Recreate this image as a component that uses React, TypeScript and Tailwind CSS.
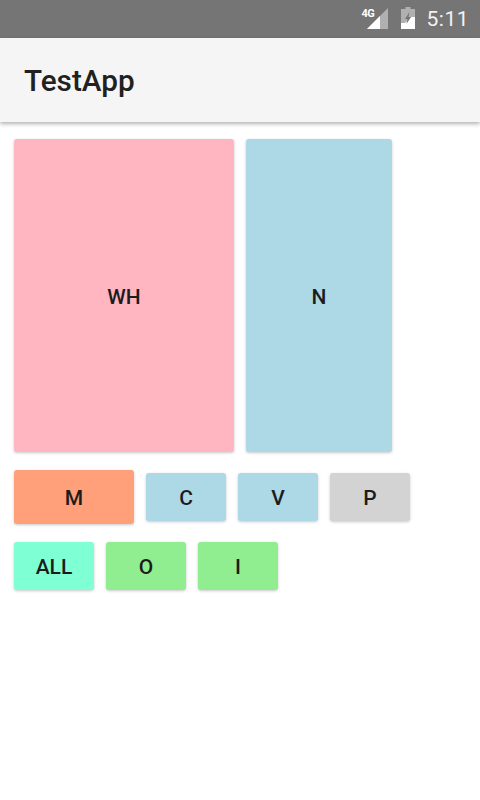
const Tile = ({ label, className }: { label: string; className: string }) => (
  <div
    className={`flex items-center justify-center rounded-[3px] text-[21px] font-medium text-[#1c1c1c] shadow-[0_1px_3px_rgba(0,0,0,0.22)] ${className}`}
  >
    {label}
  </div>
);

const StatusBar = () => (
  <div className="flex h-[38px] items-center justify-end bg-[#757575] pr-[11px]">
    <div className="relative mr-[13px] h-[30px] w-[27px]">
      <span className="absolute left-px top-[3px] text-[11px] font-bold leading-[14px] tracking-[-0.5px] text-white">4G</span>
      <svg width="27" height="30" viewBox="0 0 27 30" className="block">
        <path d="M6 25 L27 4 V25 Z" fill="#b0b0b0" />
        <path d="M6 25 L19 12 V25 Z" fill="#ffffff" />
      </svg>
    </div>
    <svg width="14" height="22" viewBox="0 0 14 22" className="mb-[2px] mr-[12px] block">
      <path d="M4.5 0 H9.5 V2 H14 V22 H0 V2 H4.5 Z" fill="#b0b0b0" />
      <path d="M0 22 V16 H4 L10 10 H14 V22 Z" fill="#ffffff" />
      <path d="M8.5 5 L4 12 H6.5 L5.5 17 L10 10 H7.5 Z" fill="#757575" />
    </svg>
    <span className="text-[21px] leading-none tracking-[0.5px] text-[#f2f2f2]">5:11</span>
  </div>
);

export default function App() {
  return (
    <div className="h-[800px] w-[480px] overflow-hidden bg-white font-['Roboto',sans-serif]">
      <StatusBar />
      <div className="flex h-[84px] items-center bg-[#f5f5f5] pl-[24px] pt-[2px] shadow-[0_2px_4px_rgba(0,0,0,0.3)]">
        <h1 className="text-[29.7px] font-medium text-[#212121]">TestApp</h1>
      </div>

      <div className="flex flex-col px-[14px] pt-[17px]">
        <div className="flex gap-[12px]">
          <Tile label="WH" className="h-[313px] w-[220px] bg-[#ffb6c1] pt-[4px]" />
          <Tile label="N" className="h-[313px] w-[146px] bg-[#add8e6] pt-[4px]" />
        </div>

        <div className="mt-[18px] flex items-center gap-[12px]">
          <Tile label="M" className="h-[54px] w-[120px] bg-[#ffa07a] pt-[3px]" />
          <Tile label="C" className="h-[48px] w-[80px] bg-[#add8e6] pt-[3px]" />
          <Tile label="V" className="h-[48px] w-[80px] bg-[#add8e6] pt-[3px]" />
          <Tile label="P" className="h-[48px] w-[80px] bg-[#d3d3d3] pt-[3px]" />
        </div>

        <div className="mt-[18px] flex gap-[12px]">
          <Tile label="ALL" className="h-[48px] w-[80px] bg-[#7fffd4] pt-[3px]" />
          <Tile label="O" className="h-[48px] w-[80px] bg-[#90ee90] pt-[3px]" />
          <Tile label="I" className="h-[48px] w-[80px] bg-[#90ee90] pt-[3px]" />
        </div>
      </div>
    </div>
  );
}
